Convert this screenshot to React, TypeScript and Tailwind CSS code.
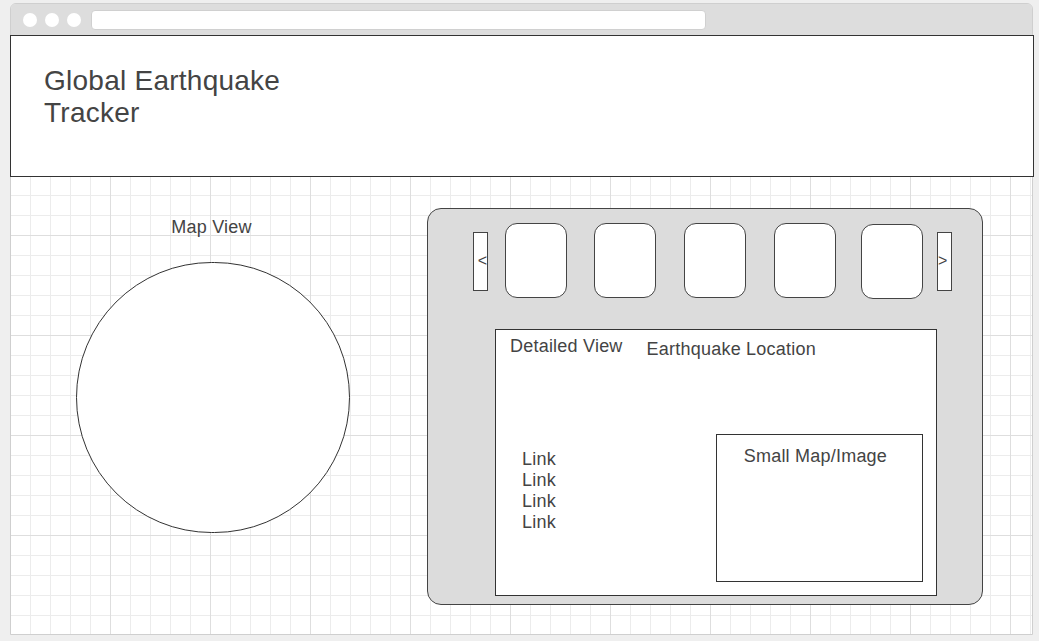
import React from 'react';

const Card = ({ extra = '' }: { extra?: string }) => (
    <div className={`w-[62px] h-[75px] shrink-0 rounded-[12px] border border-[#444] bg-white ${extra}`} />
);

export default function App() {
    return (
        <div className="w-[1039px] h-[641px] overflow-hidden bg-[#efefef] pt-[3px] pl-[10px] font-['Liberation_Sans',Arial,sans-serif] text-[#444]">
            <div className="w-[1023px] h-[632px] flex flex-col rounded-t-[6px] border border-[#cfcfcf]">
                {/* Browser chrome */}
                <div className="h-[31px] shrink-0 bg-[#dddddd] rounded-t-[5px] flex items-center pl-[12px]">
                    <div className="flex gap-[8px]">
                        <div className="w-[14px] h-[14px] rounded-full bg-white" />
                        <div className="w-[14px] h-[14px] rounded-full bg-white" />
                        <div className="w-[14px] h-[14px] rounded-full bg-white" />
                    </div>
                    <div className="ml-[10px] w-[615px] h-[20px] rounded-[4px] border border-[#d0d0d0] bg-white" />
                </div>

                {/* Header */}
                <div className="h-[142px] shrink-0 -ml-px -mr-[2px] border border-[#333] bg-white pl-[33px] pt-[29px]">
                    <h1 className="w-[270px] text-[28px] leading-[32px] tracking-[0.25px] font-normal">Global Earthquake Tracker</h1>
                </div>

                {/* Canvas */}
                <div className="flex-1 flex items-start bg-white bg-[linear-gradient(to_right,#dedede_1px,transparent_1px),linear-gradient(to_bottom,#dedede_1px,transparent_1px),linear-gradient(to_right,#ececec_1px,transparent_1px),linear-gradient(to_bottom,#ececec_1px,transparent_1px)] bg-[size:100px_100px,100px_100px,20px_20px,20px_20px] bg-[position:-1px_58px,-1px_58px,-1px_18px,-1px_18px] text-[18px] leading-[21px] tracking-[0.22px]">
                    <div className="pl-[65px] pt-[40px] flex flex-col items-center">
                        <div className="-ml-[3px]">Map View</div>
                        <div className="mt-[24px] w-[274px] h-[271px] rounded-full border border-[#333] bg-white" />
                    </div>

                    <div className="ml-[77px] mt-[31px] w-[556px] h-[397px] rounded-[14px] border border-[#444] bg-[#dcdcdc] flex flex-col">
                        {/* Carousel */}
                        <div className="flex items-start pt-[14px] pl-[45px]">
                            <div className="mt-[9px] w-[15px] h-[59px] border border-[#444] bg-white flex items-center justify-end text-[16px] leading-none tracking-normal pb-[2px]">&lt;</div>
                            <Card extra="ml-[17px]" />
                            <Card extra="ml-[27px]" />
                            <Card extra="ml-[28px]" />
                            <Card extra="ml-[28px]" />
                            <Card extra="ml-[25px] mt-px" />
                            <div className="ml-[14px] mt-[9px] w-[15px] h-[59px] border border-[#444] bg-white flex items-center justify-start text-[16px] leading-none tracking-normal pb-[2px]">&gt;</div>
                        </div>

                        {/* Detailed view */}
                        <div className="ml-[67px] mt-[30px] w-[442px] h-[267px] border border-[#333] bg-white flex flex-col">
                            <div className="flex items-start pl-[14px] pt-[6px]">
                                <span>Detailed View</span>
                                <span className="ml-[24px] mt-[3px]">Earthquake Location</span>
                            </div>
                            <div className="flex items-start mt-[74px]">
                                <div className="ml-[26px] mt-[15px] flex flex-col">
                                    <span>Link</span>
                                    <span>Link</span>
                                    <span>Link</span>
                                    <span>Link</span>
                                </div>
                                <div className="ml-[160px] w-[207px] h-[148px] border border-[#333] flex justify-center pt-[11px]">
                                    <span className="-ml-[8px]">Small Map/Image</span>
                                </div>
                            </div>
                        </div>
                    </div>
                </div>
            </div>
        </div>
    );
}
